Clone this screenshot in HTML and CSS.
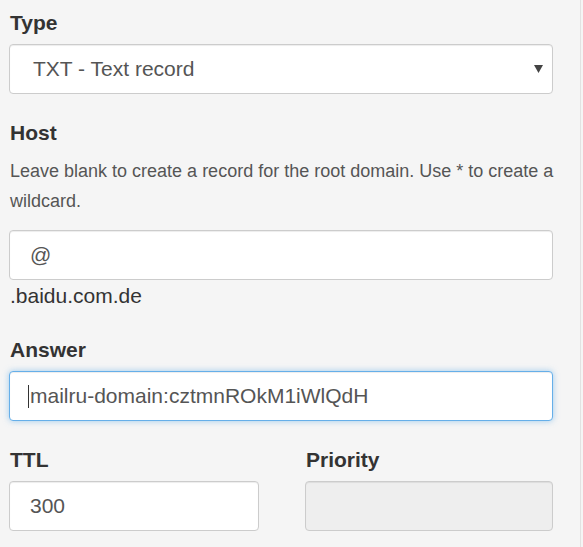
FILE: index.html
```html
<!DOCTYPE html>
<html>
<head>
<meta charset="utf-8">
<link rel="stylesheet" href="styles.css">
</head>
<body>
<div class="panel">
  <div class="group">
    <label class="label">Type</label>
    <div class="select-wrap">
      <div class="control select">TXT - Text record</div>
      <svg class="arrow" width="9" height="8" viewBox="0 0 9 8"><polygon points="0,0 9,0 4.5,8" fill="#444"/></svg>
    </div>
  </div>
  <div class="group">
    <label class="label">Host</label>
    <p class="help">Leave blank to create a record for the root domain. Use * to create a wildcard.</p>
    <div class="control">@</div>
    <div class="suffix">.baidu.com.de</div>
  </div>
  <div class="group">
    <label class="label">Answer</label>
    <div class="control focus"><span class="caret"></span>mailru-domain:cztmnROkM1iWlQdH</div>
  </div>
  <div class="row">
    <div class="col">
      <label class="label">TTL</label>
      <div class="control">300</div>
    </div>
    <div class="col">
      <label class="label">Priority</label>
      <div class="control disabled"></div>
    </div>
  </div>
</div>
</body>
</html>
```
FILE: styles.css
```css
html, body {
  margin: 0;
  padding: 0;
  background: #f5f5f5;
}
.panel {
  width: 581px;
  height: 547px;
  box-sizing: border-box;
  border-right: 1px solid #e2e2e2;
  padding: 11px 27px 0 9px;
  font-family: "Liberation Sans", Arial, sans-serif;
  color: #333;
}
.group {
  margin-bottom: 27px;
}
.label {
  display: block;
  font-weight: bold;
  font-size: 21px;
  line-height: 23px;
  margin: 0 0 10px 1px;
}
.help {
  margin: 12px -8px 14px 1px;
  font-size: 18px;
  line-height: 30px;
  color: #555;
}
.control {
  position: relative;
  height: 50px;
  box-sizing: border-box;
  border: 1px solid #ccc;
  border-radius: 4px;
  background: #fff;
  box-shadow: inset 0 1px 1px rgba(0,0,0,0.075);
  padding: 0 20px;
  font-size: 21px;
  line-height: 48px;
  color: #555;
  white-space: nowrap;
}
.select-wrap {
  position: relative;
}
.select {
  padding-left: 23px;
}
.arrow {
  position: absolute;
  right: 10px;
  top: 21px;
}
.focus {
  border-color: #66afe9;
  box-shadow: inset 0 1px 1px rgba(0,0,0,0.075), 0 0 6px rgba(102,175,233,0.6);
}
.caret {
  position: absolute;
  left: 18px;
  top: 13px;
  width: 1px;
  height: 23px;
  background: #333;
}
.suffix {
  font-size: 21px;
  line-height: 31px;
  color: #333;
  margin-left: 1px;
}
.row {
  display: grid;
  grid-template-columns: 250px 248px;
  column-gap: 46px;
  margin-top: 2px;
}
.col .label + .control {
  margin-top: 0;
}
.disabled {
  background: #eee;
}
```
